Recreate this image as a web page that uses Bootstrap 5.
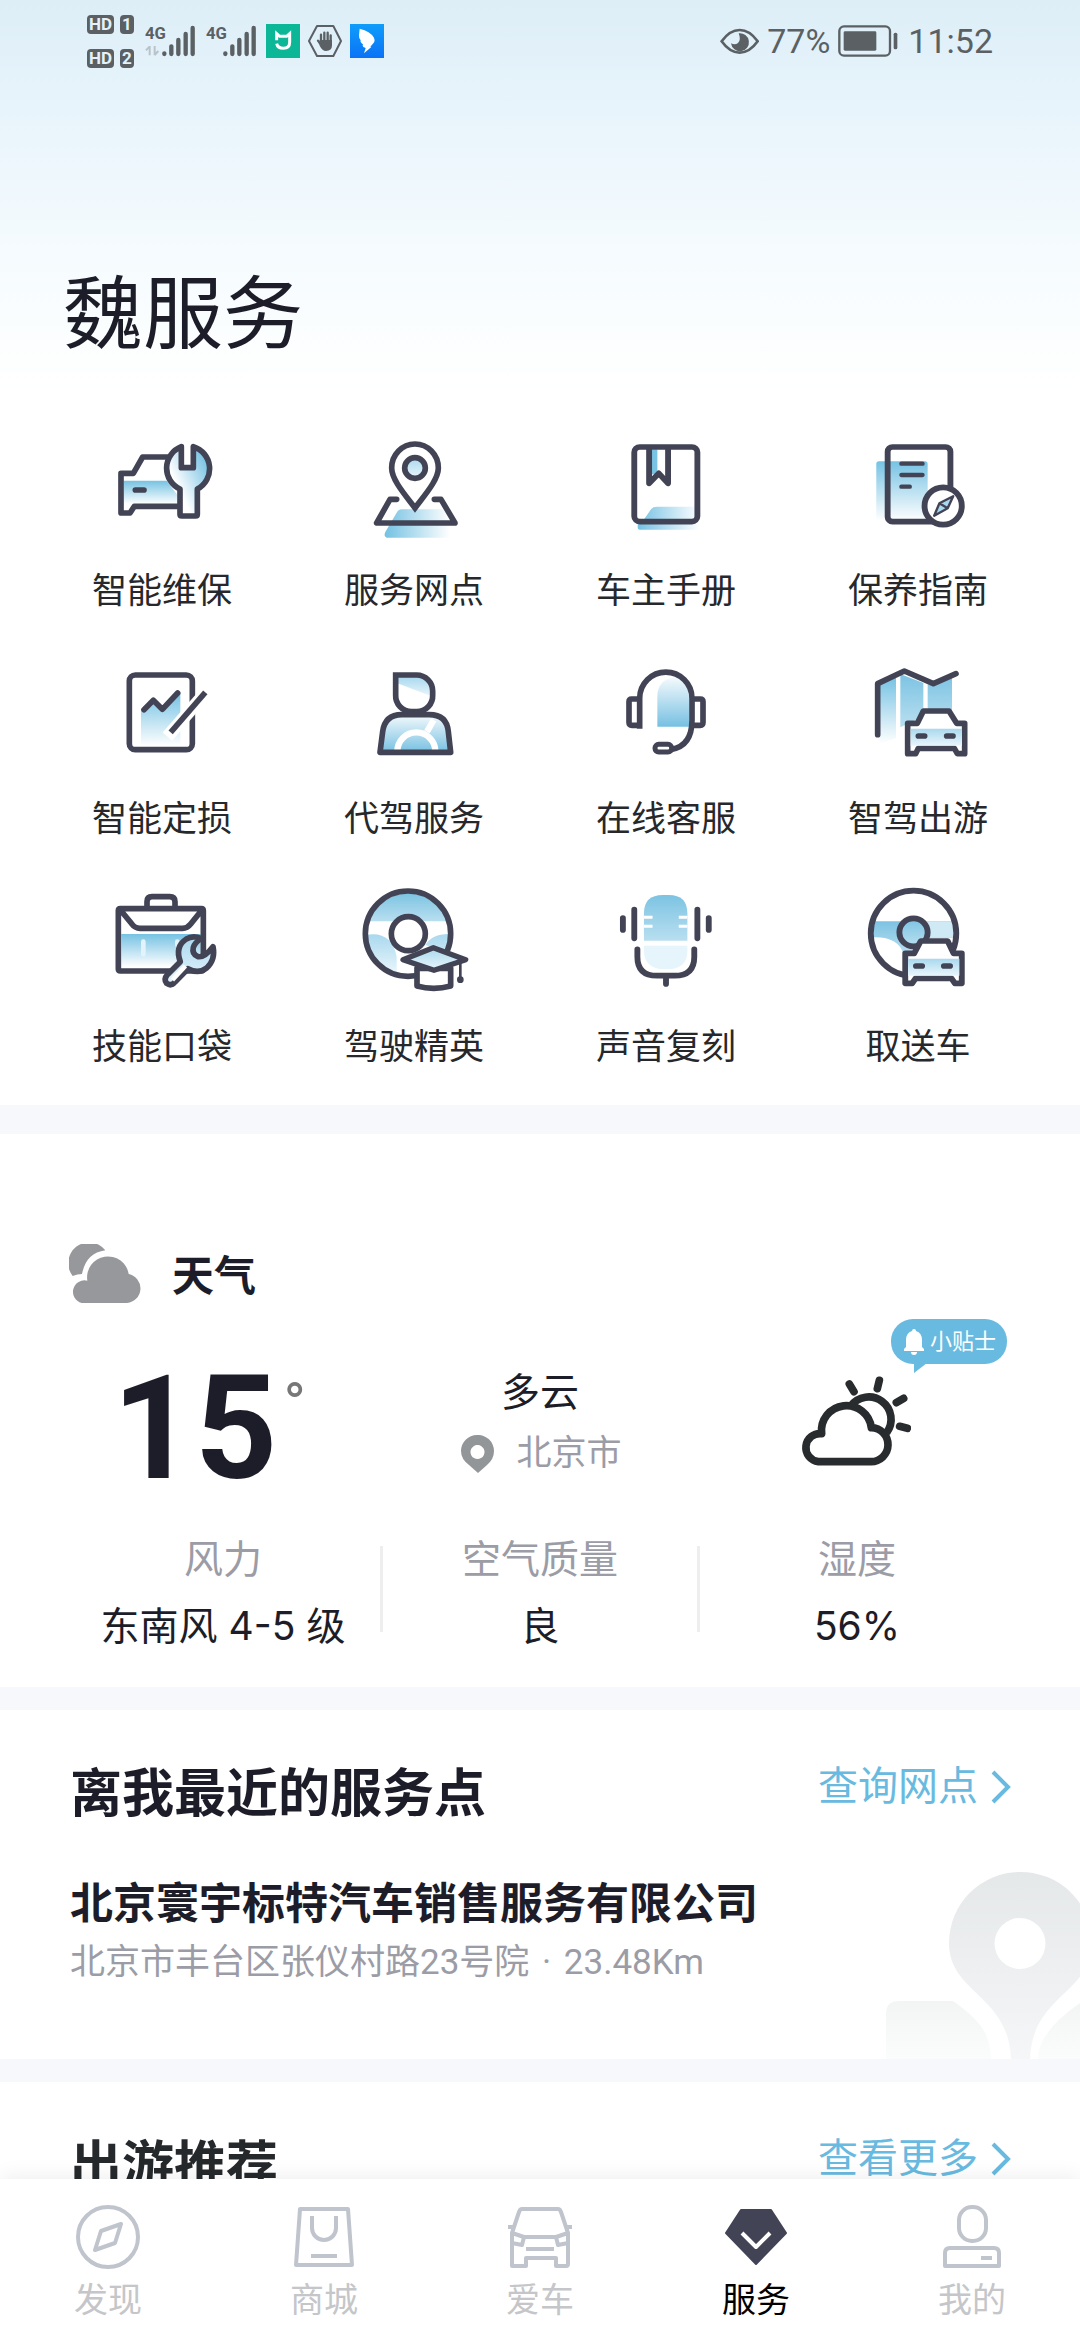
<!DOCTYPE html>
<html lang="zh-CN">
<head>
<meta charset="utf-8">
<meta name="viewport" content="width=device-width, initial-scale=1">
<title>魏服务</title>
<link href="https://cdn.jsdelivr.net/npm/bootstrap@5.3.0/dist/css/bootstrap.min.css" rel="stylesheet">
<style>
  :root { --ink: #1c1d29; --muted: #9b9ca6; --sky: #68bae0; --line: #424456; --band: #f6f8fc; }
  body { font-family: Roboto, "Noto Sans CJK SC", sans-serif; color: var(--ink); background: #fff; }
  a { text-decoration: none; color: inherit; }
  svg { display: block; flex: none; }
  .scroll-area { min-height: 0; overflow: auto; scrollbar-width: none; }
  .hero { background: linear-gradient(#ddeef7 0, #e6f3fb 90px, #f5fbfe 250px, #fff 390px); padding-bottom: 33px; }

  .status { height: 82px; padding: 0 87px; color: #5a6064; font-size: 34px; line-height: 40px; }
  .sim-rows { gap: 15px; margin-right: 11px; }
  .sim-rows > div { gap: 6px; }
  .sim-tag { background: #5a6064; color: #e4f1f9; font-size: 17px; line-height: 19px; height: 19px; border-radius: 4px; font-weight: 700; text-align: center; width: 14px; }
  .sim-tag.wide { width: 27px; }
  .apps { gap: 8px; margin-left: 10px; }
  .signals { gap: 11px; }
  .battery { margin: 0 10px 0 8px; }

  .page-title { font-size: 80px; line-height: 96px; font-weight: 400; padding: 185px 63px 0; margin: 0 0 62px; }
  .services { padding: 0 36px; row-gap: 37px; }
  .service { gap: 23px; font-size: 35px; line-height: 48px; color: #26282c; }
  .ln { fill: none; stroke: var(--line); stroke-width: 17; stroke-linejoin: round; stroke-linecap: round; }
  .ln.white-fill { fill: #fff; }

  .band { height: 23px; background: var(--band); flex: none; }
  .band.tall { height: 29px; }

  .weather { padding: 110px 66px 37px; }
  .weather-head { gap: 30px; height: 60px; padding-left: 3px; }
  .weather-head h2 { font-size: 42px; line-height: 60px; font-weight: 700; margin: 0; padding-top: 6px; }
  .now { margin-top: 62px; height: 120px; padding-top: 3px; }
  .temp-col { padding-right: 30px; gap: 6px; }
  .temp { font-size: 144px; line-height: 120px; font-weight: 700; }
  .degree { font-size: 60px; line-height: 72px; color: #777; }
  .sky-text, .stat { font-size: 39px; line-height: 48px; }
  .city { font-size: 35px; line-height: 40px; color: var(--muted); gap: 22px; margin-top: 17px; padding-left: 3px; }
  .sky-icon { padding-top: 7px; }
  .tip { position: absolute; top: -47px; right: 7px; width: 116px; height: 45px; border: 0; border-radius: 22px; background: var(--sky); color: #fff; font-size: 22px; line-height: 45px; padding: 0 0 0 13px; gap: 6px; }
  .tip::after { content: ""; position: absolute; left: 23px; top: 44px; border-top: 10px solid var(--sky); border-right: 13px solid transparent; }
  .stats { margin-top: 50px; }
  .stat { gap: 18px; }
  .stat dt { font-weight: 400; color: var(--muted); }
  .stat dd { margin: 0; font-family: Inter, "Noto Sans CJK SC", sans-serif; }
  .rule { width: 3px; margin: 10px 0 18px; background: #eee; }

  .panel { padding: 57px 69px 0 70px; }
  .panel h2 { font-size: 52px; line-height: 56px; font-weight: 700; margin: 0; }
  .more { font-size: 40px; line-height: 40px; color: var(--sky); gap: 13px; }
  .nearest { height: 349px; overflow: hidden; }
  .shop-name { font-size: 43px; line-height: 56px; font-weight: 700; margin: 53px 0 0; }
  .shop-addr { font-size: 35px; line-height: 48px; color: var(--muted); margin: 7px 0 0; }
  .watermark { position: absolute; right: -3px; bottom: 0; }
  .trips { color: #26292c; }

  .tabs { height: 161px; background: #fff; padding-top: 25px; box-shadow: 0 -2px 20px rgba(0,0,0,.07); z-index: 2; flex: none; }
  .tab { font-size: 34px; line-height: 44px; color: #c5c6c9; gap: 8px; }
  .tab.active { color: #000; }
  .tab svg { fill: none; stroke: #c0c4cd; stroke-width: 4; stroke-linejoin: round; }
</style>
</head>
<body>
<svg width="0" height="0" class="position-absolute" aria-hidden="true">
  <defs>
    <linearGradient id="down" x2="0" y2="1"><stop stop-color="#76c2e3"/><stop offset="1" stop-color="#fff"/></linearGradient>
    <linearGradient id="up" x2="0" y2="1"><stop stop-color="#f4fafd"/><stop offset="1" stop-color="#76c0e1"/></linearGradient>
    <linearGradient id="right"><stop stop-color="#74c1e3"/><stop offset="1" stop-color="#fff"/></linearGradient>
    <linearGradient id="soft" x2="0" y2="1"><stop stop-color="#7cc3e2"/><stop offset="1" stop-color="#b9dff0"/></linearGradient>
    <linearGradient id="corner" x1="1" y1="0.2" x2="0.35" y2="0.7"><stop stop-color="#6dbde1"/><stop offset="1" stop-color="#fff"/></linearGradient>
    <linearGradient id="light" x2="0" y2="1"><stop stop-color="#a9d8ee"/><stop offset="1" stop-color="#e9f6fc"/></linearGradient>
    <linearGradient id="fog" x2="0" y2="1"><stop stop-color="#e5e8e9"/><stop offset="1" stop-color="#f5f6f7"/></linearGradient>
    <linearGradient id="fog2" x2="0" y2="1"><stop stop-color="#f3f5f5"/><stop offset="1" stop-color="#fbfcfc"/></linearGradient>
    <linearGradient id="bluesq" x2="0" y2="1"><stop stop-color="#0f9dfb"/><stop offset="1" stop-color="#0b72f6"/></linearGradient>
  </defs>
</svg>
<div class="vh-100 d-flex flex-column overflow-hidden">
<main class="scroll-area flex-grow-1">
  <header class="hero">
    <div class="status d-flex align-items-center justify-content-between">
      <div class="d-flex align-items-center">
        <div class="sim-rows d-flex flex-column">
          <div class="d-flex"><span class="sim-tag wide">HD</span><span class="sim-tag">1</span></div>
          <div class="d-flex"><span class="sim-tag wide">HD</span><span class="sim-tag">2</span></div>
        </div>
        <div class="signals d-flex">
          <svg width="50" height="32" viewBox="257 72 150 96" fill="#5a6064"><text x="257" y="115" font-size="50" font-weight="700">4G</text><g stroke="#5a6064" stroke-width="13" stroke-linecap="round"><path d="M315 157v2M336 136v23M357 117v42M379 99v60M400 81v78"/></g><path d="M271 135v28M260 148l11-12M286 135v28M297 150l-11 12" stroke="#b9c3c9" stroke-width="6" fill="none"/></svg>
          <svg width="50" height="32" viewBox="440 72 150 96" fill="#5a6064"><text x="440" y="115" font-size="50" font-weight="700">4G</text><g stroke="#5a6064" stroke-width="13" stroke-linecap="round"><path d="M498 157v2M519 136v23M540 117v42M562 99v60M583 81v78"/></g></svg>
        </div>
        <div class="apps d-flex">
          <svg width="34" height="34" viewBox="618 72 102 102"><path fill="#0cb798" d="M618 72h102v102H618z"/><path d="M650 121v-20l9 8h21l9-8v26q0 18-19 18-17 0-20-14" fill="none" stroke="#fff" stroke-width="9"/></svg>
          <svg width="34" height="34" viewBox="744 72 102 102"><path d="M771 78h49l23 45-23 45h-49l-24-45z" fill="none" stroke="#5a6064" stroke-width="6" stroke-linejoin="round"/><path d="M783 122v-18M793 120V98M803 120V98M812 124v-18M774 122l10 14" stroke="#5a6064" stroke-width="7" stroke-linecap="round"/><path d="M779 120h37v16q0 17-18 17-11 0-19-16z" fill="#5a6064"/></svg>
          <svg width="34" height="34" viewBox="870 72 102 102"><path fill="url(#bluesq)" d="M870 72h102v102H870z"/><path d="M899 86q32 8 42 26 6 11-1 18l-9 10 3 1-22 19 5-16-7-3q-4-5-1-8-10-7-7-12-6-8-5-15 1-10 2-20z" fill="#fff"/></svg>
        </div>
      </div>
      <div class="d-flex align-items-center">
        <svg width="39" height="27" viewBox="58 79 117 81"><path d="M63 119q24-34 54-34t54 34q-24 34-54 34t-54-34z" fill="none" stroke="#5a6064" stroke-width="8"/><path d="M114 95a27 27 0 1 1-23 30q12 6 21-1 10-9 2-29z" fill="#5a6064"/></svg>
        <span class="ms-2">77%</span>
        <svg class="battery" width="60" height="32" viewBox="413 73 180 96"><rect x="417" y="77" width="152" height="88" rx="14" fill="none" stroke="#5a6064" stroke-width="7"/><rect x="430" y="92" width="98" height="58" rx="4" fill="#5a6064"/><rect x="580" y="96" width="11" height="50" rx="5" fill="#5a6064"/></svg>
        <span>11:52</span>
      </div>
    </div>
    <h1 class="page-title">魏服务</h1>
    <nav class="services row g-0 row-cols-4 text-center" aria-label="服务">
      <a href="#" class="service col d-flex flex-column align-items-center">
        <svg width="120" height="120" viewBox="186 525 360 360"><path d="M251 692H380l32 43v27H251z" fill="url(#down)"/><path class="ln" d="M385 621h-77l-28 49h-37v119h27l13-20h140M286 720h26"/><path class="ln" style="fill:url(#corner)" d="M424 590A69 69 0 0 0 420 717V793q0 5 5 5H467q5 0 5-5V717A69 69 0 0 0 460 590V653H424z"/></svg>
        <span>智能维保</span></a>
      <a href="#" class="service col d-flex flex-column align-items-center">
        <svg width="120" height="120" viewBox="942 525 360 360"><path d="M1085 778h145v85H1040q-10-5-4-17l34-58q6-10 15-10z" fill="url(#right)"/><path class="ln" d="M1070 748h-20l-40 71h235l-42-71h-20"/><path class="ln white-fill" style="stroke-linejoin:miter" d="M1125 582a70 72 0 0 1 70 72c0 35-40 80-70 120c-30-40-70-85-70-120a70 72 0 0 1 70-72z"/><circle class="ln" cx="1125" cy="654" r="31" style="fill:url(#light)"/></svg>
        <span>服务网点</span></a>
      <a href="#" class="service col d-flex flex-column align-items-center">
        <svg width="120" height="120" viewBox="192 15 348 360" preserveAspectRatio="none"><path d="M340 260H460v37H303l20-30q5-7 17-7zM284 308H464v21H290q-6 0-6-6z" fill="url(#right)"/><path d="M325 88h16v75h-16z" fill="#79c3e3"/><rect class="ln" x="274" y="81" width="183" height="224" rx="16"/><path class="ln" d="M317 85V190l28-30 27 30V85"/></svg>
        <span>车主手册</span></a>
      <a href="#" class="service col d-flex flex-column align-items-center">
        <svg width="120" height="120" viewBox="923 15 348 360" preserveAspectRatio="none"><rect x="976" y="124" width="149" height="178" rx="8" fill="url(#down)"/><path class="ln" d="M1140 305H1023a14 14 0 0 1-14-14V95a14 14 0 0 1 14-14H1177a14 14 0 0 1 14 14V200"/><path class="ln" style="stroke-width:13" d="M1049 131h61M1049 165h61M1049 200h24"/><ellipse class="ln white-fill" cx="1170" cy="258" rx="54" ry="56"/><path d="M1199 229l-16 36-39 22 15-37zM1159 250l24 15" fill="#a9d8ee" stroke="#424456" stroke-width="7" stroke-linejoin="round"/></svg>
        <span>保养指南</span></a>
      <a href="#" class="service col d-flex flex-column align-items-center">
        <svg width="120" height="120" viewBox="126 39 360 360"><rect class="ln" x="208" y="105" width="189" height="224" rx="18"/><path d="M243 212l37-30 27 30 54-52v158H243z" fill="url(#down)"/><path class="ln" d="M252 209l28-28 27 27 46-49"/><path d="M322 290L440 155" stroke="#fff" stroke-width="38"/><path d="M332 277L436 157" stroke="#424456" stroke-width="17"/></svg>
        <span>智能定损</span></a>
      <a href="#" class="service col d-flex flex-column align-items-center">
        <svg width="120" height="120" viewBox="882 39 360 360"><path d="M1012 110h58q40 0 43 58l-101-38z" fill="url(#light)"/><path class="ln" style="stroke-linejoin:miter" d="M1007 105h63a48 48 0 0 1 48 48v12a48 48 0 0 1-48 50h-15a48 48 0 0 1-48-50z"/><path d="M960 337l8-62q7-51 57-51h83q52 0 57 51l7 62z" fill="url(#up)"/><path d="M1012 334a57 57 0 0 1 114 0M1101 275l20-35" fill="none" stroke="#fff" stroke-width="19"/><path class="ln" d="M960 337l8-62q7-51 57-51h83q52 0 57 51l7 62z"/></svg>
        <span>代驾服务</span></a>
      <a href="#" class="service col d-flex flex-column align-items-center">
        <svg width="120" height="120" viewBox="198 39 360 360"><path d="M352 260v-90q0-50 50-58q45 10 45 63v85z" fill="url(#up)"/><path class="ln" style="stroke-linecap:butt" d="M299 266V175a78 78 0 0 1 157 0V240q0 78-62 88M299 177h-24q-8 0-8 8v62q0 9 9 9h23M463 177h18q8 0 8 8v62q0 9-8 9h-18"/><rect class="ln" style="stroke-width:15" x="345" y="313" width="50" height="23" rx="11"/></svg>
        <span>在线客服</span></a>
      <a href="#" class="service col d-flex flex-column align-items-center">
        <svg width="120" height="120" viewBox="954 39 360 360"><path d="M1018 136l50-24v182l-50 18z" fill="url(#down)"/><path d="M1081 102l69 27v100l-69 33zM1163 133h18l55-25v110h-73z" fill="url(#soft)"/><path class="ln" d="M1013 284V131l80-38 87 38 68-30"/><path class="ln white-fill" d="M1103 250h29l18-37h77l23 37h24v91h-22l-9-16H1135l-8 16h-24z"/><path d="M1112 266h154v51H1112z" fill="url(#light)"/><path class="ln" d="M1135 288h19M1220 288h19"/></svg>
        <span>智驾出游</span></a>
      <a href="#" class="service col d-flex flex-column align-items-center">
        <svg width="120" height="120" viewBox="126 63 360 360"><path d="M184 222H422V320H184z" fill="url(#down)"/><path d="M250 245v38M352 245v10" stroke="#e3f3fb" stroke-width="14" stroke-linecap="round"/><path class="ln" d="M261 140v-15q0-15 15-15h53q16 0 16 15v15M181 146H424q6 0 6 6V327q0 6-6 6H181q-6 0-6-6V152q0-6 6-6zM183 152l31 38q11 15 26 15H368q14 0 24-13l32-40"/><path class="ln" style="fill:url(#light)" d="M424 236Q405 247 400 262q-5 20 14 28q20 3 45-30q8 40-19 64q-25 19-56 2l-39 40q-12 14-25 4q-10-12 2-26l39-39q-17-45 18-68q20-12 45-1z"/><path d="M376 318l-39 42" stroke="#fff" stroke-width="14"/></svg>
        <span>技能口袋</span></a>
      <a href="#" class="service col d-flex flex-column align-items-center">
        <svg width="120" height="120" viewBox="882 63 360 360"><path d="M928 184a122 122 0 0 1 232 0z" fill="url(#soft)"/><path d="M920 224q75-12 90 66v50a125 125 0 0 1-90-116zM1166 222q-50 0-70 33l60 20z" fill="url(#light)"/><circle class="ln" cx="1044" cy="221" r="128"/><circle class="ln white-fill" cx="1045" cy="221" r="51"/><path class="ln white-fill" d="M1071 325v53q50 14 101 0v-53z"/><path d="M1029 299l91-36 97 36-95 32z" fill="url(#light)" stroke="#424456" stroke-width="16" stroke-linejoin="round"/><path class="ln" style="stroke-width:8" d="M1201 305v50"/><circle cx="1201" cy="359" r="10" fill="#424456"/></svg>
        <span>驾驶精英</span></a>
      <a href="#" class="service col d-flex flex-column align-items-center">
        <svg width="120" height="120" viewBox="192 63 348 360" preserveAspectRatio="none"><path d="M302 242v-82q0-55 55-55h17q54 0 54 55v82z" fill="url(#soft)"/><path d="M302 257h126v15q0 48-45 55h-36q-45-10-45-55z" fill="#e6f4fb"/><path d="M302 172h25M302 199h25M403 172h25M403 199h25" stroke="#fff" stroke-width="9"/><path class="ln" d="M241 174v36M274 149v86M457 149v86M490 174v36M283 268v22q0 57 57 57h51q57 0 57-57v-22M366 347v25"/></svg>
        <span>声音复刻</span></a>
      <a href="#" class="service col d-flex flex-column align-items-center">
        <svg width="120" height="120" viewBox="923 63 348 360" preserveAspectRatio="none"><path d="M966 184h236l3 49H1090v50h-35q-15-55-92-51z" fill="url(#soft)"/><path d="M1110 184h90l5 49h-95z" fill="#cfe9f5"/><ellipse class="ln" cx="1084" cy="220" rx="124" ry="128"/><ellipse class="ln" style="fill:url(#soft)" cx="1084" cy="217" rx="41" ry="42"/><path class="ln white-fill" d="M1060 280h26l19-37h78l17 37h24v90h-20l-10-15H1090l-10 15h-20z"/><path d="M1068 296h149v51H1068z" fill="url(#light)"/><path class="ln" d="M1091 318h18M1172 318h18"/></svg>
        <span>取送车</span></a>
    </nav>
  </header>
  <div class="band tall"></div>

  <section class="weather">
    <div class="weather-head d-flex align-items-center">
      <svg width="73" height="60" viewBox="86 70 219 180" fill="#97989b"><path d="M97 166A59 59 0 0 1 195 89Q137 97 125 160q-14 0-28 6zM124 247a34 34 0 1 1 17-67A62 62 0 0 1 265 160a44 44 0 0 1-5 87z"/></svg>
      <h2>天气</h2>
    </div>
    <div class="now row g-0 row-cols-3 position-relative">
      <div class="temp-col col d-flex justify-content-center"><span class="temp">15</span><span class="degree">°</span></div>
      <div class="col d-flex flex-column align-items-center">
        <span class="sky-text">多云</span>
        <span class="city d-flex align-items-center"><svg width="33" height="38" viewBox="0 0 33 38"><path fill="#939699" fill-rule="evenodd" d="M16 0a16 16 0 0 1 17 16q0 8-7 14l-9 8-9-8Q0 24 0 16A16 16 0 0 1 16 0zm0 10a7 7 0 1 0 1 0z"/></svg>北京市</span>
      </div>
      <div class="sky-icon col d-flex align-items-start justify-content-center">
        <svg width="110" height="90" viewBox="716 257 330 270" fill="none" stroke="#292c2e" stroke-width="23" stroke-linejoin="round"><path d="M768 514a42 42 0 1 1 10-84A75 75 0 0 1 927 412a51 51 0 0 1-2 102z" /><path d="M865 347a63 63 0 0 1 108 80"/><path d="M861 281l14 23M951 270l-6 25M1002 337l22-13M1012 408l23 6" stroke-linecap="round"/></svg>
      </div>
      <button type="button" class="tip d-flex align-items-center"><svg width="20" height="26" viewBox="0 0 20 26" fill="#fff"><path d="M10 0q2 0 2 2 6 2 6 9v7l2 2v2H0v-2l2-2v-7q0-7 6-9 0-2 2-2zM7 23h6q0 3-3 3t-3-3z"/></svg>小贴士</button>
    </div>
    <dl class="stats d-flex mb-0 text-center">
      <div class="stat d-flex flex-column flex-fill w-100"><dt>风力</dt><dd>东南风 4-5 级</dd></div>
      <div class="rule flex-shrink-0"></div>
      <div class="stat d-flex flex-column flex-fill w-100"><dt>空气质量</dt><dd>良</dd></div>
      <div class="rule flex-shrink-0"></div>
      <div class="stat d-flex flex-column flex-fill w-100"><dt>湿度</dt><dd>56%</dd></div>
    </dl>
  </section>
  <div class="band"></div>

  <section class="panel nearest position-relative">
    <svg class="watermark" width="200" height="190" viewBox="0 0 200 190"><path fill="url(#fog)" fill-rule="evenodd" d="M137 3a71 71 0 0 0-71 71c0 50 60 52 62 116h19c2-64 62-66 62-116a71 71 0 0 0-72-71zm0 46a25 25 0 1 1 0 51 25 25 0 0 1 0-51z"/><path fill="url(#fog2)" d="M3 190v-45q0-13 13-13h54c25 18 37 30 38 58zM155 190q0-28 45-58v58z"/></svg>
    <div class="d-flex justify-content-between align-items-start">
      <h2>离我最近的服务点</h2>
      <a href="#" class="more d-flex align-items-center">查询网点<svg width="20" height="34" viewBox="0 0 20 34" fill="none" stroke="#68bae0" stroke-width="4"><path d="M2 2l15 15L2 32"/></svg></a>
    </div>
    <h3 class="shop-name">北京寰宇标特汽车销售服务有限公司</h3>
    <p class="shop-addr">北京市丰台区张仪村路23号院 <span class="mx-1">·</span> 23.48Km</p>
  </section>
  <div class="band"></div>

  <section class="panel trips">
    <div class="d-flex justify-content-between align-items-start">
      <h2>出游推荐</h2>
      <a href="#" class="more d-flex align-items-center">查看更多<svg width="20" height="34" viewBox="0 0 20 34" fill="none" stroke="#68bae0" stroke-width="4"><path d="M2 2l15 15L2 32"/></svg></a>
    </div>
  </section>
</main>

<nav class="tabs row g-0 row-cols-5" aria-label="主导航">
  <a href="#" class="tab col d-flex flex-column align-items-center"><svg width="66" height="66" viewBox="0 0 66 66"><circle cx="33" cy="33" r="30"/><path d="M46 20l-6 19-20 7 6-19z"/></svg>发现</a>
  <a href="#" class="tab col d-flex flex-column align-items-center"><svg width="66" height="66" viewBox="0 0 66 66"><path d="M9 5h48l4 56H5zM21 12v12a12 12 0 0 0 24 0V12M20 52h26"/></svg>商城</a>
  <a href="#" class="tab col d-flex flex-column align-items-center"><svg width="66" height="66" viewBox="0 0 66 66"><path d="M15 5h36q2 0 3 3l7 21v31q0 2-2 2H49v-8H19v8H5V29L12 8q1-3 3-3zM1 23h6M59 23h6M5 29l12 4h32l12-4M17 33l-2 8-10-2M49 33l2 8 10-2M19 45h28"/></svg>爱车</a>
  <a href="#" class="tab active col d-flex flex-column align-items-center" aria-current="page"><svg width="66" height="66" viewBox="0 0 66 66"><path d="M18 6h30l15 23-30 31L3 29z" style="fill:#424456;stroke:#424456;stroke-width:2"/><path d="M19 29l14 14 14-14" style="stroke:#fff"/></svg>服务</a>
  <a href="#" class="tab col d-flex flex-column align-items-center"><svg width="66" height="66" viewBox="0 0 66 66"><rect x="20" y="3" width="27" height="34" rx="13"/><path d="M6 62V49q0-5 5-5h44q5 0 5 5v13zM42 54h11"/></svg>我的</a>
</nav>
</div>
<script src="https://cdn.jsdelivr.net/npm/bootstrap@5.3.0/dist/js/bootstrap.bundle.min.js"></script>
</body>
</html>
